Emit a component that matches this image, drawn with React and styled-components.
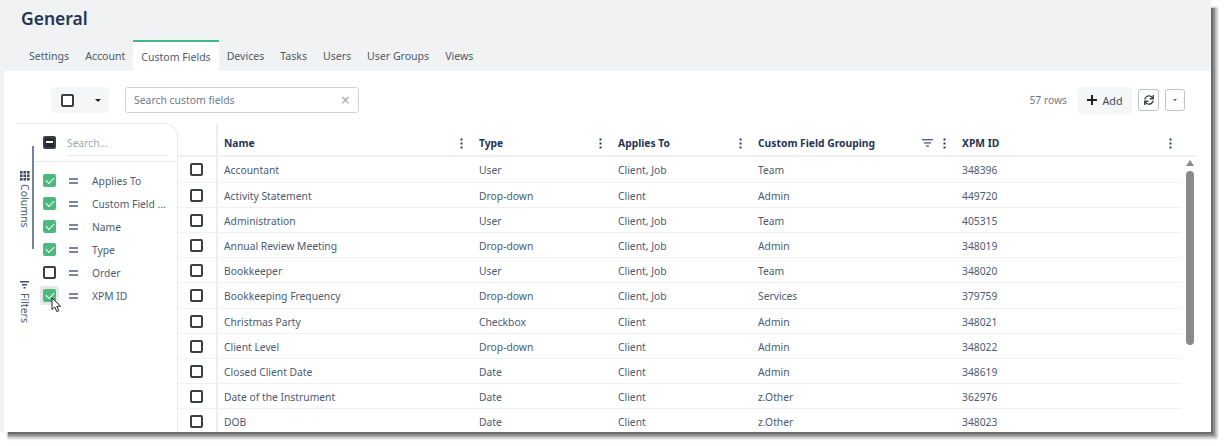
import React from "react"
import styled, { createGlobalStyle } from "styled-components"
import { FaSync } from "react-icons/fa"

const tabs = ["Settings", "Account", "Custom Fields", "Devices", "Tasks", "Users", "User Groups", "Views"]

const columns = [
  { name: "Applies To", checked: true },
  { name: "Custom Field ...", checked: true },
  { name: "Name", checked: true },
  { name: "Type", checked: true },
  { name: "Order", checked: false },
  { name: "XPM ID", checked: true, hover: true },
]

const rows = [
  ["Accountant", "User", "Client, Job", "Team", "348396"],
  ["Activity Statement", "Drop-down", "Client", "Admin", "449720"],
  ["Administration", "User", "Client, Job", "Team", "405315"],
  ["Annual Review Meeting", "Drop-down", "Client, Job", "Admin", "348019"],
  ["Bookkeeper", "User", "Client, Job", "Team", "348020"],
  ["Bookkeeping Frequency", "Drop-down", "Client, Job", "Services", "379759"],
  ["Christmas Party", "Checkbox", "Client", "Admin", "348021"],
  ["Client Level", "Drop-down", "Client", "Admin", "348022"],
  ["Closed Client Date", "Date", "Client", "Admin", "348619"],
  ["Date of the Instrument", "Date", "Client", "z.Other", "362976"],
  ["DOB", "Date", "Client", "z.Other", "348023"],
]

const heads = [
  { name: "Name" },
  { name: "Type" },
  { name: "Applies To" },
  { name: "Custom Field Grouping", filter: true },
  { name: "XPM ID" },
]

const Kebab = () => (
  <svg width="3" height="11" viewBox="0 0 3 11" fill="#2b3f5c">
    <rect x="0.5" y="0.5" width="2" height="2" />
    <rect x="0.5" y="4.5" width="2" height="2" />
    <rect x="0.5" y="8.5" width="2" height="2" />
  </svg>
)

const FilterLines = () => (
  <FilterSvg width="11" height="8" viewBox="0 0 11 8" fill="#55647c">
    <rect x="0" y="0" width="11" height="1.4" />
    <rect x="2" y="3.2" width="7" height="1.4" />
    <rect x="4" y="6.4" width="3" height="1.4" />
  </FilterSvg>
)

const GridIcon = () => (
  <svg width="10" height="10" viewBox="0 0 10 10" fill="#3b4a63">
    {[0, 3.5, 7].map((x) =>
      [0, 3.5, 7].map((y) => <rect key={`${x}-${y}`} x={x} y={y} width="2.6" height="2.6" />)
    )}
  </svg>
)

const FilterIcon = () => (
  <svg width="9" height="9" viewBox="0 0 9 9" fill="#3b4a63">
    <rect x="0" y="0" width="9" height="1.5" />
    <rect x="2" y="3" width="5" height="1.5" />
    <rect x="3.5" y="6" width="2" height="1.5" />
  </svg>
)

const Cursor = () => (
  <svg width="11" height="16" viewBox="0 0 11 16">
    <path d="M1 1 L1 12.5 L3.8 10 L5.8 14.6 L7.8 13.7 L5.8 9.3 L9.6 9.2 Z" fill="#fff" stroke="#222" strokeWidth="1" strokeLinejoin="round" />
  </svg>
)

function App() {
  return (
    <>
      <GlobalStyle />
      <Frame>
        <PageHeader>
          <Title>General</Title>
          <TabBar>
            {tabs.map((tab) => (
              <Tab key={tab} $active={tab === "Custom Fields"}>{tab}</Tab>
            ))}
          </TabBar>
        </PageHeader>
        <Content>
          <Toolbar>
            <SelectButton>
              <Checkbox />
              <Caret />
            </SelectButton>
            <SearchBox>
              <span>Search custom fields</span>
              <Clear>×</Clear>
            </SearchBox>
            <ToolbarRight>
              <RowCount>57 rows</RowCount>
              <AddButton><PlusSign />Add</AddButton>
              <IconButton><FaSync size={10} color="#3a4350" /></IconButton>
              <IconButton $narrow><Caret $small /></IconButton>
            </ToolbarRight>
          </Toolbar>
          <Body>
            <SidePanel>
              <Rail>
                <RailTab $active><GridIcon />Columns</RailTab>
                <RailTab><FilterIcon />Filters</RailTab>
              </Rail>
              <ColumnPanel>
                <PanelHead>
                  <Checkbox $state="mixed" />
                  <PanelSearch>Search...</PanelSearch>
                </PanelHead>
                <ColumnList>
                  {columns.map((col) => (
                    <ColumnRow key={col.name}>
                      <CheckWrap $hover={col.hover}>
                        <Checkbox $state={col.checked ? "on" : "off"} />
                        {col.hover && <CursorWrap><Cursor /></CursorWrap>}
                      </CheckWrap>
                      <DragHandle />
                      <ColumnName>{col.name}</ColumnName>
                    </ColumnRow>
                  ))}
                </ColumnList>
              </ColumnPanel>
            </SidePanel>
            <Table>
              <HeadRow>
                <CheckCell />
                {heads.map((head) => (
                  <HeadCell key={head.name}>
                    <HeadName>{head.name}</HeadName>
                    {head.filter && <FilterLines />}
                    <Kebab />
                  </HeadCell>
                ))}
              </HeadRow>
              {rows.map((row) => (
                <Row key={row[0]}>
                  <CheckCell $body><Checkbox /></CheckCell>
                  {row.map((value, i) => (
                    <Cell key={i}>{value}</Cell>
                  ))}
                </Row>
              ))}
            </Table>
            <ScrollTrack>
              <ScrollArrow />
              <ScrollThumb />
            </ScrollTrack>
          </Body>
        </Content>
      </Frame>
    </>
  )
}

export default App

const GlobalStyle = createGlobalStyle`
  html, body {
    margin: 0;
    padding: 0;
    background: #fff;
    overflow: hidden;
    min-height: 446px;
  }
  * {
    box-sizing: border-box;
  }
`

const Frame = styled.div`
  display: flex;
  flex-direction: column;
  width: 1211px;
  height: 432px;
  overflow: hidden;
  background: #f0f2f4;
  box-shadow: 5px 5px 0 -3px #6a6a6a, 6px 6px 1px -2px #8f8f8f, 7px 7px 2px -1px #bbbbbb, 7px 7px 2px 0 #e2e2e2;
  font-family: "Noto Sans", "Open Sans", sans-serif;
  font-size: 10.3px;
  color: #4b5b73;
`

const PageHeader = styled.header`
  height: 71px;
  flex-shrink: 0;
  padding-left: 21px;
`

const Title = styled.h1`
  margin: 0;
  padding-top: 5px;
  height: 40px;
  font-size: 17.5px;
  line-height: 26px;
  font-weight: 600;
  color: #1f3556;
`

const TabBar = styled.nav`
  display: flex;
  align-items: stretch;
  height: 31px;
`

const Tab = styled.div`
  display: flex;
  align-items: center;
  padding: 0 8px ${(p) => (p.$active ? "0" : "2px")};
  font-size: 10.55px;
  color: ${(p) => (p.$active ? "#4b5b73" : "#4f5a68")};
  background: ${(p) => (p.$active ? "#fff" : "transparent")};
  border-top: 2px solid ${(p) => (p.$active ? "#3fb984" : "transparent")};
`

const Content = styled.main`
  flex: 1;
  min-height: 0;
  margin-left: 4px;
  background: #fff;
  display: flex;
  flex-direction: column;
`

const Toolbar = styled.div`
  display: flex;
  align-items: center;
  height: 52px;
  flex-shrink: 0;
  padding: 6px 26px 0 47px;
  gap: 16px;
`

const SelectButton = styled.div`
  display: flex;
  align-items: center;
  justify-content: space-between;
  width: 58px;
  height: 26px;
  padding: 0 8px 0 10px;
  background: #f5f6f7;
  border-radius: 3px;
`

const Caret = styled.span`
  width: 0;
  height: 0;
  border-left: ${(p) => (p.$small ? "2.5px" : "3.5px")} solid transparent;
  border-right: ${(p) => (p.$small ? "2.5px" : "3.5px")} solid transparent;
  border-top: ${(p) => (p.$small ? "2.5px" : "3.5px")} solid ${(p) => (p.$small ? "#555" : "#222")};
`

const SearchBox = styled.div`
  display: flex;
  align-items: center;
  justify-content: space-between;
  width: 234px;
  height: 26px;
  padding: 0 8px;
  border: 1px solid #cfd3d8;
  border-radius: 3px;
  color: #6e7a8a;
  font-size: 10.4px;
`

const Clear = styled.span`
  font-size: 16px;
  line-height: 1;
  color: #a9adb3;
`

const ToolbarRight = styled.div`
  display: flex;
  align-items: center;
  margin-left: auto;
  gap: 6px;
`

const RowCount = styled.span`
  margin-right: 5px;
  font-size: 10.3px;
  color: #707a86;
`

const AddButton = styled.div`
  display: flex;
  align-items: center;
  justify-content: center;
  gap: 5px;
  width: 54px;
  height: 27px;
  background: #f5f6f7;
  border-radius: 3px;
  font-size: 10.8px;
  color: #3f4d60;
`

const PlusSign = styled.span`
  width: 10px;
  height: 10px;
  background:
    linear-gradient(#222, #222) center / 10px 2px no-repeat,
    linear-gradient(#222, #222) center / 2px 10px no-repeat;
`

const IconButton = styled.div`
  display: flex;
  align-items: center;
  justify-content: center;
  width: ${(p) => (p.$narrow ? "20px" : "21px")};
  height: 22px;
  border: 1px solid #bfc3c8;
  border-radius: 3px;
  background: #fff;
`

const Body = styled.div`
  flex: 1;
  min-height: 0;
  display: flex;
  padding-left: 13px;
`

const SidePanel = styled.aside`
  display: flex;
  width: 161px;
  flex-shrink: 0;
  border-top: 1.5px solid #e9ebee;
  border-right: 1.5px solid #e9ebee;
  border-top-right-radius: 14px;
`

const Rail = styled.div`
  display: flex;
  flex-direction: column;
  width: 17px;
  padding-top: 22px;
  flex-shrink: 0;
`

const RailTab = styled.div`
  display: flex;
  align-items: center;
  justify-content: center;
  gap: 3px;
  height: 103px;
  padding-top: 3px;
  border-right: 2px solid ${(p) => (p.$active ? "#76839c" : "transparent")};
  font-size: 10.5px;
  line-height: 1;
  writing-mode: vertical-rl;
  color: #4b5b73;
`

const ColumnPanel = styled.div`
  flex: 1;
  min-width: 0;
`

const PanelHead = styled.div`
  display: flex;
  align-items: center;
  gap: 11px;
  height: 38px;
  padding: 0 9px;
  border-bottom: 1.5px solid #e9ebee;
`

const PanelSearch = styled.div`
  flex: 1;
  align-self: flex-start;
  margin-top: 2px;
  height: 30px;
  line-height: 35px;
  border-bottom: 1.5px solid #e9ebee;
  font-size: 10.3px;
  color: #a3a8b0;
`

const ColumnList = styled.div`
  padding-top: 7px;
`

const ColumnRow = styled.div`
  display: flex;
  align-items: center;
  height: 23px;
  padding-left: 9px;
`

const CheckWrap = styled.div`
  position: relative;
  display: flex;
  align-items: center;
  justify-content: center;
  width: 13px;
  height: 13px;
  &::before {
    content: "";
    display: ${(p) => (p.$hover ? "block" : "none")};
    position: absolute;
    inset: -3px;
    background: #e6e7e8;
    border-radius: 3px;
  }
`

const CursorWrap = styled.div`
  position: absolute;
  left: 8px;
  top: 8px;
  width: 11px;
  height: 16px;
`

const DragHandle = styled.span`
  width: 9px;
  height: 6px;
  margin-left: 13px;
  border-top: 2px solid #7b879f;
  border-bottom: 2px solid #7b879f;
`

const ColumnName = styled.span`
  margin-left: 14px;
  white-space: nowrap;
  font-size: 10.3px;
`

const Checkbox = styled.span`
  position: relative;
  display: block;
  flex-shrink: 0;
  width: 13px;
  height: 13px;
  border-radius: 2px;
  border: 2px solid ${(p) => (p.$state === "on" ? "#4cb97f" : "#3b3f48")};
  background: ${(p) => (p.$state === "on" ? "#4cb97f" : p.$state === "mixed" ? "#26282c" : "#fff")};
  &::after {
    content: "";
    position: absolute;
    display: ${(p) => (p.$state === "on" || p.$state === "mixed" ? "block" : "none")};
    ${(p) =>
      p.$state === "on"
        ? `left: 1px; top: 0.5px; width: 7px; height: 4px; border-left: 1.5px solid #fff; border-bottom: 1.5px solid #fff; transform: rotate(-45deg);`
        : `left: 1px; top: 3px; width: 7px; height: 2px; background: #fff;`}
  }
`

const Table = styled.section`
  width: 1004px;
  flex-shrink: 0;
`

const HeadRow = styled.div`
  display: grid;
  grid-template-columns: 40px 255px 139px 140px 204px 226px;
  width: 1018px;
  height: 34.4px;
  border-bottom: 2px solid #f0f1f2;
`

const Row = styled.div`
  display: grid;
  grid-template-columns: 40px 255px 139px 140px 204px 226px;
  height: 25.2px;
  border-bottom: 1.5px solid #f0f1f2;
`

const CheckCell = styled.div`
  display: flex;
  align-items: center;
  justify-content: center;
  padding: ${(p) => (p.$body ? "1px" : "0")} 1px 0 0;
  border-right: 2px solid #eceef0;
`

const HeadCell = styled.div`
  display: flex;
  align-items: center;
  gap: 8px;
  padding: 8px 10px 0 6px;
`

const HeadName = styled.span`
  flex: 1;
  font-size: 10.3px;
  font-weight: 700;
  color: #1f3556;
  white-space: nowrap;
`

const FilterSvg = styled.svg`
  margin-right: 2px;
`

const Cell = styled.div`
  display: flex;
  align-items: center;
  padding: 2px 0 0 6px;
  white-space: nowrap;
`

const ScrollTrack = styled.div`
  display: flex;
  flex-direction: column;
  align-items: center;
  width: 8px;
  margin-left: 4px;
  padding-top: 37px;
`

const ScrollArrow = styled.span`
  width: 0;
  height: 0;
  border-left: 4px solid transparent;
  border-right: 4px solid transparent;
  border-bottom: 6px solid #8a8a8a;
`

const ScrollThumb = styled.span`
  flex-shrink: 0;
  width: 8px;
  height: 174px;
  margin-top: 5px;
  border-radius: 4px;
  background: #8a8a8a;
`
